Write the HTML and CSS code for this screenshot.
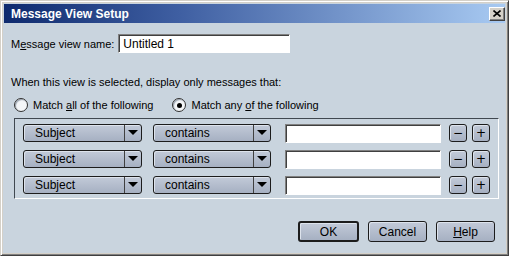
FILE: index.html
```html
<!DOCTYPE html>
<html lang="en">
<head>
    <meta charset="UTF-8">
    <title>Message View Setup</title>
    <link rel="stylesheet" href="styles.css">
</head>
<body>
    <div class="dialog">
        <div class="titlebar">
            <span class="title">Message View Setup</span>
            <button class="close">
                <svg width="8" height="7" viewBox="0 0 8 7"><path d="M0.5 0.5 L7.5 6.5 M7.5 0.5 L0.5 6.5" stroke="#000" stroke-width="1.6" fill="none"/></svg>
            </button>
        </div>
        <div class="content">
            <div class="name-row">
                <label>M<u>e</u>ssage view name:</label>
                <div class="field name-field">Untitled 1</div>
            </div>
            <p class="hint">When this view is selected, display only messages that:</p>
            <div class="radios">
                <span class="radio"><span class="dot"></span><span>Match <u>a</u>ll of the following</span></span>
                <span class="radio checked"><span class="dot"></span><span>Match any <u>o</u>f the following</span></span>
            </div>
            <div class="rules">
                <div class="rule">
                    <div class="combo subject"><span class="combo-text">Subject</span><span class="arrow"></span></div>
                    <div class="combo op"><span class="combo-text">contains</span><span class="arrow"></span></div>
                    <div class="field rule-field"></div>
                    <button class="mini">&minus;</button>
                    <button class="mini">+</button>
                </div>
                <div class="rule">
                    <div class="combo subject"><span class="combo-text">Subject</span><span class="arrow"></span></div>
                    <div class="combo op"><span class="combo-text">contains</span><span class="arrow"></span></div>
                    <div class="field rule-field"></div>
                    <button class="mini">&minus;</button>
                    <button class="mini">+</button>
                </div>
                <div class="rule">
                    <div class="combo subject"><span class="combo-text">Subject</span><span class="arrow"></span></div>
                    <div class="combo op"><span class="combo-text">contains</span><span class="arrow"></span></div>
                    <div class="field rule-field"></div>
                    <button class="mini">&minus;</button>
                    <button class="mini">+</button>
                </div>
            </div>
            <div class="actions">
                <button class="btn default">OK</button>
                <button class="btn">Cancel</button>
                <button class="btn"><u>H</u>elp</button>
            </div>
        </div>
    </div>
</body>
</html>
```
FILE: styles.css
```css
* {
    margin: 0;
    padding: 0;
    box-sizing: border-box;
}
body {
    width: 512px;
    height: 257px;
    background: #ffffff;
    font-family: 'Liberation Sans', Arial, sans-serif;
    font-size: 11px;
    color: #000;
    overflow: hidden;
}
.dialog {
    width: 509px;
    height: 256px;
    background: #c9d4de;
    border-top: 1px solid #d4d0c8;
    border-left: 1px solid #d4d0c8;
    border-right: 1px solid #404040;
    border-bottom: 1px solid #404040;
    box-shadow: inset 1px 1px 0 #ffffff, inset -1px -1px 0 #808080, inset 2px 2px 0 #d4d0c8, inset -2px -2px 0 #d4d0c8;
    padding: 3px;
    display: flex;
    flex-direction: column;
}
.titlebar {
    height: 19px;
    background: linear-gradient(90deg, #0e2a6e 0%, #3f5fa2 35%, #a8caf2 100%);
    display: flex;
    align-items: center;
    justify-content: space-between;
    padding: 0 0 0 7px;
}
.title {
    color: #fff;
    font-weight: bold;
    font-size: 12px;
    font-family: 'Liberation Sans', Arial, sans-serif;
}
.close {
    width: 16px;
    height: 14px;
    background: #d4d0c8;
    border: 1px solid;
    border-color: #fff #404040 #404040 #fff;
    box-shadow: inset -1px -1px 0 #808080;
    display: flex;
    align-items: center;
    justify-content: center;
}
.content {
    flex: 1;
    padding: 11px 8px 0 7px;
    display: flex;
    flex-direction: column;
}
.name-row {
    display: flex;
    align-items: center;
    gap: 4px;
}
.field {
    background: #fff;
    border: 1px solid;
    border-color: #808080 #fff #fff #808080;
    box-shadow: inset 1px 1px 0 #404040;
}
.name-field {
    width: 172px;
    height: 19px;
    padding: 3px 4px;
    line-height: 12px;
    font-size: 12px;
}
.hint {
    margin-top: 23px;
    line-height: 12px;
}
.radios {
    display: flex;
    gap: 19px;
    margin-top: 10px;
    padding-left: 3px;
}
.radio {
    display: flex;
    align-items: center;
    gap: 5px;
    font-size: 11px;
}
.dot {
    width: 14px;
    height: 14px;
    border-radius: 50%;
    background: #f4f6f8;
    border: 1px solid #303030;
    box-shadow: inset 1px 1px 1px #9aa4b0;
    display: flex;
    align-items: center;
    justify-content: center;
}
.checked .dot::after {
    content: '';
    width: 5px;
    height: 5px;
    border-radius: 50%;
    background: #000;
}
.rules {
    margin-top: 6px;
    margin-left: 3px;
    width: 485px;
    border: 1px solid;
    border-color: #404850 #fff #fff #404850;
    padding: 5px 0 4px 8px;
    display: flex;
    flex-direction: column;
    gap: 8px;
}
.rule {
    display: flex;
    align-items: center;
    height: 18px;
}
.combo {
    height: 18px;
    display: flex;
    border: 1px solid #1c1c1c;
    border-radius: 3px;
    background: linear-gradient(#c2cad8, #a6b0c2);
    box-shadow: inset 1px 1px 0 #dde3ec;
}
.combo.subject {
    width: 119px;
}
.combo.op {
    width: 118px;
    margin-left: 11px;
}
.combo-text {
    flex: 1;
    padding-left: 11px;
    line-height: 16px;
    font-size: 12px;
}
.arrow {
    width: 17px;
    border-left: 1px solid #404040;
    position: relative;
}
.arrow::after {
    content: '';
    position: absolute;
    left: 3px;
    top: 5px;
    border-left: 5px solid transparent;
    border-right: 5px solid transparent;
    border-top: 5px solid #000;
}
.rule-field {
    width: 156px;
    height: 19px;
    margin-left: 14px;
}
.mini {
    width: 18px;
    height: 18px;
    margin-left: 8px;
    border: 1px solid #1c1c1c;
    border-radius: 3px;
    background: linear-gradient(#c2cad8, #a6b0c2);
    box-shadow: inset 1px 1px 0 #dde3ec;
    font-family: 'DejaVu Sans', sans-serif;
    font-size: 12px;
    line-height: 14px;
    color: #000;
}
.mini + .mini {
    margin-left: 5px;
}
.actions {
    display: flex;
    justify-content: flex-end;
    gap: 9px;
    margin-top: 22px;
    padding-right: 2px;
}
.btn {
    width: 59px;
    height: 21px;
    border: 1px solid #1c1c1c;
    border-radius: 3px;
    background: linear-gradient(#c2cad8, #a6b0c2);
    box-shadow: inset 1px 1px 0 #dde3ec;
    font-family: 'Liberation Sans', Arial, sans-serif;
    font-size: 12px;
    color: #000;
}
.btn.default {
    width: 61px;
    border-width: 2px;
}
```
